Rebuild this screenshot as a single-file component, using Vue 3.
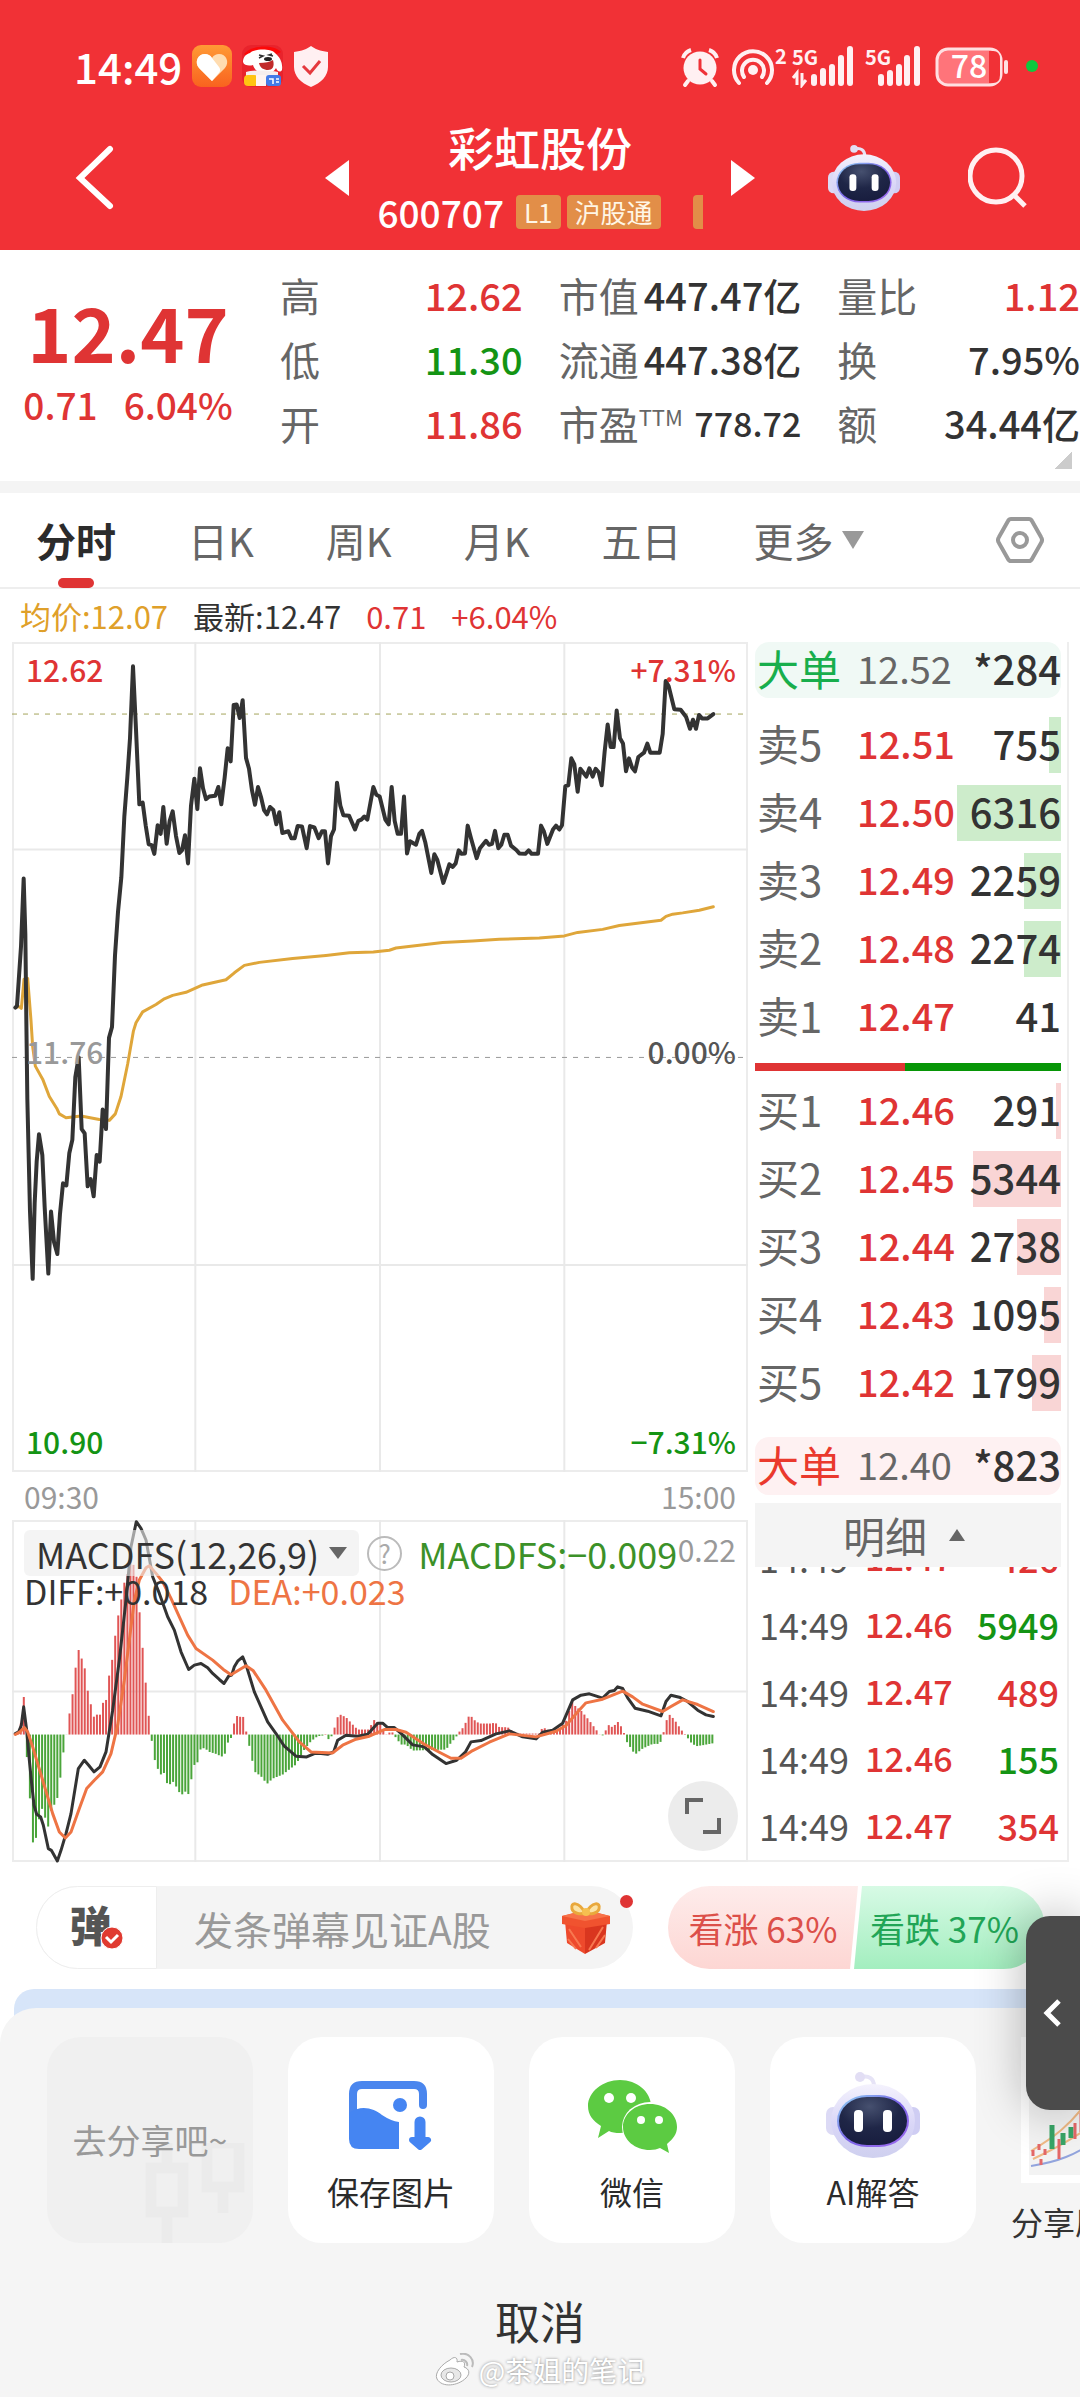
<script setup>
const stats = [
  [
    { label: '高', value: '12.62', tone: 'up' },
    { label: '低', value: '11.30', tone: 'down' },
    { label: '开', value: '11.86', tone: 'up' },
  ],
  [
    { label: '市值', value: '447.47亿' },
    { label: '流通', value: '447.38亿' },
    { label: '市盈', sup: 'TTM', value: '778.72', small: true },
  ],
  [
    { label: '量比', value: '1.12', tone: 'up' },
    { label: '换', value: '7.95%' },
    { label: '额', value: '34.44亿' },
  ],
]

const tabs = ['分时', '日K', '周K', '月K', '五日']

const asks = [
  { label: '卖5', price: '12.51', volume: 755, bar: 12 },
  { label: '卖4', price: '12.50', volume: 6316, bar: 104 },
  { label: '卖3', price: '12.49', volume: 2259, bar: 37 },
  { label: '卖2', price: '12.48', volume: 2274, bar: 37 },
  { label: '卖1', price: '12.47', volume: 41, bar: 0 },
]
const bids = [
  { label: '买1', price: '12.46', volume: 291, bar: 5 },
  { label: '买2', price: '12.45', volume: 5344, bar: 88 },
  { label: '买3', price: '12.44', volume: 2738, bar: 44 },
  { label: '买4', price: '12.43', volume: 1095, bar: 17 },
  { label: '买5', price: '12.42', volume: 1799, bar: 29 },
]
const trades = [
  { time: '14:49', price: '12.47', volume: 426, tone: 'up' },
  { time: '14:49', price: '12.46', volume: 5949, tone: 'down' },
  { time: '14:49', price: '12.47', volume: 489, tone: 'up' },
  { time: '14:49', price: '12.46', volume: 155, tone: 'down' },
  { time: '14:49', price: '12.47', volume: 354, tone: 'up' },
]

const priceLine =
  '48,870 53,866 58,810 65,730 73,573 78,700 81,900 84,1080 92,1340 100,1495 106,1320 112,1225 119,1162 129,1210 136,1330 147,1483 155,1340 164,1410 174,1438 182,1345 191,1275 201,1280 210,1205 219,1175 228,1030 238,985 247,1150 256,1160 265,1282 274,1265 283,1305 292,1210 301,1225 310,1105 320,1150 329,940 338,915 347,750 356,650 366,570 375,430 384,340 392,250 401,84 410,230 420,402 430,398 439,450 448,494 457,496 465,516 475,450 484,470 492,408 502,493 511,440 520,418 530,475 540,514 548,508 557,473 566,538 575,405 585,343 594,413 602,319 611,365 620,390 630,384 648,382 657,362 666,402 676,340 685,273 694,303 703,173 712,172 721,203 730,162 740,295 749,320 758,370 767,403 776,362 785,385 794,415 803,425 812,408 822,415 831,448 840,420 849,468 867,464 876,480 886,480 895,452 908,453 922,503 932,452 945,455 958,480 968,464 977,464 986,538 995,475 1004,460 1013,352 1023,405 1032,427 1049,428 1067,460 1077,440 1086,437 1095,430 1104,437 1113,400 1122,362 1131,380 1141,384 1158,437 1168,448 1177,362 1186,440 1195,470 1205,470 1214,384 1223,515 1232,487 1250,495 1260,470 1268,463 1278,490 1296,560 1305,517 1314,530 1332,583 1342,560 1350,540 1360,546 1369,538 1378,508 1387,516 1397,515 1405,451 1415,480 1432,526 1442,503 1460,486 1469,495 1478,493 1487,463 1497,503 1506,495 1515,472 1525,472 1535,497 1551,507 1560,515 1578,516 1588,508 1597,516 1616,516 1625,451 1634,465 1644,493 1661,460 1670,451 1680,460 1688,450 1698,360 1707,358 1716,296 1725,310 1735,373 1743,320 1761,338 1770,319 1780,338 1789,320 1798,328 1807,358 1816,280 1825,218 1834,270 1843,270 1852,186 1862,250 1871,262 1880,326 1889,296 1898,317 1907,326 1917,293 1934,283 1944,262 1953,283 1981,283 1990,240 1999,118 2008,130 2025,183 2044,184 2060,200 2072,228 2081,207 2090,228 2099,196 2108,204 2125,204 2142,194'
const averageLine =
  '48,870 60,868 66,872 70,840 74,805 85,803 95,900 100,960 108,1005 130,1035 150,1075 172,1102 180,1115 200,1124 245,1120 300,1128 330,1130 348,1115 365,1075 385,1000 402,925 410,905 430,880 470,863 495,850 520,842 560,835 610,818 680,806 705,790 735,773 780,766 880,757 980,750 1050,744 1122,742 1170,738 1190,733 1330,720 1420,717 1500,713 1620,710 1695,705 1735,697 1810,690 1860,681 1985,669 2000,660 2020,655 2050,652 2100,646 2142,638'
const diffLine =
  '48,1000 58,995 66,975 73,920 82,990 90,1080 97,1150 104,1215 112,1242 124,1250 132,1275 147,1345 156,1350 174,1382 185,1350 200,1300 215,1240 228,1160 237,1105 255,1080 268,1095 284,1115 302,1100 320,1055 340,930 360,780 380,600 395,440 411,365 425,385 440,420 460,530 480,580 505,650 525,690 545,755 568,808 585,795 605,790 625,803 640,820 660,838 674,850 688,828 697,825 705,800 715,783 730,770 742,800 765,875 785,920 805,965 830,1000 855,1038 890,1068 922,1070 945,1060 965,1060 985,1062 1003,1055 1015,1020 1040,1005 1075,1008 1105,1002 1135,969 1150,969 1165,982 1185,982 1210,1004 1240,1034 1275,1040 1300,1063 1340,1090 1372,1080 1398,1056 1415,1025 1445,1021 1490,1001 1530,992 1570,1010 1610,1016 1630,996 1660,990 1690,969 1720,899 1745,885 1770,881 1810,894 1830,874 1845,871 1855,860 1870,865 1885,893 1907,924 1945,933 1985,947 2000,904 2015,885 2040,891 2065,904 2095,930 2120,944 2142,949'
const deaLine =
  '48,1003 62,995 75,982 85,995 100,1040 130,1140 160,1240 180,1295 198,1313 215,1295 240,1225 262,1165 285,1140 310,1115 335,1060 355,975 375,840 390,720 405,600 420,540 440,503 450,497 470,520 490,545 515,595 540,650 565,705 590,745 640,780 672,808 695,824 715,812 740,797 762,812 800,870 850,960 900,1025 935,1055 1000,1058 1030,1035 1070,1017 1110,1008 1155,988 1190,988 1220,996 1275,1032 1320,1056 1355,1074 1385,1074 1420,1051 1470,1026 1530,1001 1610,1010 1670,993 1700,976 1730,941 1760,908 1810,897 1870,873 1900,890 1930,912 1990,934 2015,919 2050,899 2095,913 2142,934'

// Histogram envelope as [x, height] pairs; one bar is drawn per trading minute.
const envelope = [
  [46, 3], [55, 5], [64, 30], [73, 121], [82, -60], [91, -180], [100, -324], [109, -316], [118, -258], [128, -222],
  [137, -248], [147, -277], [155, -230], [165, -210], [174, -190], [183, -130], [192, -55], [201, -3], [210, 60],
  [219, 115], [228, 195], [237, 256], [247, 228], [256, 200], [265, 133], [274, 93], [283, 53], [292, 60], [301, 56],
  [311, 95], [320, 102], [329, 175], [338, 220], [347, 292], [356, 353], [365, 400], [375, 455], [384, 480],
  [393, 520], [402, 510], [411, 480], [420, 375], [429, 270], [438, 167], [447, 66], [456, -10], [465, -72],
  [474, -100], [485, -120], [493, -112], [502, -145], [511, -150], [520, -140], [530, -155], [539, -172],
  [548, -180], [557, -170], [566, -183], [575, -140], [584, -92], [594, -85], [603, -45], [615, -40], [630, -52],
  [650, -58], [667, -66], [676, -60], [685, -25], [694, -15], [703, 30], [712, 56], [721, 52], [730, 60], [740, 12],
  [749, -30], [758, -75], [767, -112], [785, -125], [803, -148], [820, -132], [850, -120], [876, -100], [890, -90],
  [915, -45], [935, -20], [955, -5], [970, -3], [977, 4], [986, -15], [1000, -2], [1013, 50], [1022, 60], [1040, 52],
  [1058, 32], [1075, 15], [1110, 15], [1122, 45], [1145, 30], [1160, 0], [1177, 10], [1190, -10], [1205, -30],
  [1220, -30], [1240, -48], [1340, -45], [1355, -25], [1370, -8], [1377, 5], [1395, 25], [1405, 52], [1414, 57],
  [1423, 45], [1440, 33], [1478, 33], [1487, 37], [1500, 22], [1525, 22], [1540, 10], [1560, 3], [1620, 3],
  [1630, 22], [1650, 12], [1680, 15], [1700, 40], [1720, 105], [1728, 85], [1745, 72], [1770, 42], [1790, 15],
  [1805, -5], [1815, 0], [1825, 30], [1843, 20], [1852, 42], [1862, 30], [1872, 12], [1880, -18], [1907, -60],
  [1930, -42], [1960, -28], [1981, -28], [1990, -8], [1998, 35], [2010, 60], [2025, 45], [2045, 15], [2055, 3],
  [2062, -3], [2070, -20], [2090, -35], [2110, -32], [2147, -25],
]
const zero = 1003
function heightAt(x) {
  const i = envelope.findIndex((p) => p[0] >= x)
  if (i <= 0) return envelope[0][1]
  const [x0, h0] = envelope[i - 1]
  const [x1, h1] = envelope[i]
  return h0 + ((h1 - h0) * (x - x0)) / (x1 - x0)
}
const bars = Array.from({ length: 230 }, (_, i) => {
  const x = 46 + i * 9.14
  const h = heightAt(x)
  return { x: x - 3, y: h > 0 ? zero - h : zero, h: Math.abs(h), up: h > 0 }
})
</script>

<template>
  <div class="page">
    <svg class="defs" width="0" height="0" aria-hidden="true">
      <defs>
        <linearGradient id="shell" x1="0" y1="0" x2="0" y2="1">
          <stop offset="0" stop-color="#f4f2fd" /><stop offset="0.55" stop-color="#d9d6f7" /><stop offset="1" stop-color="#cfd0ef" />
        </linearGradient>
        <linearGradient id="rim" x1="0" y1="0" x2="1" y2="1">
          <stop offset="0" stop-color="#8fd8f4" /><stop offset="0.5" stop-color="#7a63e6" /><stop offset="1" stop-color="#a06bf0" />
        </linearGradient>
        <radialGradient id="visor" cx="0.45" cy="0.2" r="0.9">
          <stop offset="0" stop-color="#46506f" /><stop offset="0.5" stop-color="#1f2647" /><stop offset="1" stop-color="#161b3c" />
        </radialGradient>
        <symbol id="robot" viewBox="0 0 94 88">
          <path d="M35 6c8-2 13 2 13 9" fill="none" stroke="#e6e3f6" stroke-width="4" />
          <circle cx="34" cy="6" r="5" fill="#e2def4" />
          <rect x="0" y="36" width="14" height="28" rx="7" fill="#dcdaf5" />
          <rect x="80" y="36" width="14" height="28" rx="7" fill="#cfcdf3" />
          <ellipse cx="47" cy="50" rx="42" ry="37" fill="url(#shell)" />
          <rect x="11" y="24" width="72" height="52" rx="30" fill="url(#rim)" />
          <rect x="13" y="26" width="68" height="48" rx="28" fill="url(#visor)" />
          <rect x="28" y="39" width="9" height="22" rx="4" fill="#fff" />
          <rect x="57" y="39" width="9" height="22" rx="4" fill="#fff" />
        </symbol>
      </defs>
    </svg>

    <header class="header">
      <div class="status">
        <div class="status-side">
          <span class="clock">14:49</span>
          <svg width="40" height="42" viewBox="0 0 40 42">
            <defs><linearGradient id="orange" x1="0" y1="0" x2="0" y2="1"><stop offset="0" stop-color="#ff9a35" /><stop offset="1" stop-color="#f9621f" /></linearGradient></defs>
            <rect width="40" height="42" rx="9" fill="url(#orange)" />
            <path d="M20 36 7 23c-5-6-1-14 6-14 3 0 5 1 7 4 2-3 4-4 7-4 7 0 11 8 6 14z" fill="#ffdcb0" />
            <path d="M20 36 7 23c-5-6-1-14 6-14 3 0 5 1 7 4l7 9c2 3 1 5-1 7z" fill="#fff" />
          </svg>
          <svg width="41" height="42" viewBox="0 0 41 42">
            <rect width="41" height="42" rx="9" fill="#e8232c" />
            <path d="M2 9c6-8 28-11 37-2L30 11 8 13z" fill="#fd0808" />
            <path d="M8 8c4-4 20-5 25 0 5 4 8 10 7 17-2 3-5 1-6-2-4 8-20 8-23-3-3 1-9 1-10-3 0-5 3-8 7-9z" fill="#fff" />
            <path d="M17 18c6 0 11-1 14-3 2 7-1 10-5 10s-8-2-9-7z" fill="#c12a2a" />
            <ellipse cx="26" cy="14" rx="4" ry="2" fill="#222" />
            <path d="m17 10 4 1-4 2m13-4-3 1 4 1" fill="none" stroke="#333" stroke-width="1.500" />
            <path d="M4 27c6-2 24-2 32 0v6H4z" fill="#f6eeee" />
            <rect x="2" y="30" width="14" height="11" rx="4" fill="#ffc312" />
            <rect x="14" y="30" width="10" height="11" fill="#fff3f0" />
            <rect x="24" y="30" width="15" height="11" rx="3" fill="#437be8" />
            <path d="M27 34h4v5m3-5h3m-3 3h3" fill="none" stroke="#fff" stroke-width="1.500" />
          </svg>
          <svg width="36" height="42" viewBox="0 0 36 42">
            <path d="M18 1c4 3 9 5 17 6v15c0 9-7 16-17 20C8 38 1 31 1 22V7c8-1 13-3 17-6z" fill="#fff0f2" />
            <path d="m10 21 7 7 10-12" fill="none" stroke="#e5393e" stroke-width="3" />
          </svg>
        </div>
        <svg width="360" height="44" viewBox="0 0 360 44">
          <g fill="none" stroke="#fff0f2">
            <circle cx="20" cy="24" r="16.500" fill="#fff0f2" stroke="none" />
            <path d="M3 14a12 12 0 0 1 8-8M37 14a12 12 0 0 0-8-8" stroke-width="4" />
            <path d="m8 37-3 4m27-4 3 4" stroke-width="4" stroke-linecap="round" />
            <path d="M20 16v9l6 5" stroke="#ef3238" stroke-width="3" stroke-linecap="round" />
            <path d="M59 39a19 19 0 1 1 28 0" stroke-width="4" stroke-linecap="round" />
            <path d="M64 33a11 11 0 1 1 18 0" stroke-width="4" stroke-linecap="round" />
            <circle cx="73" cy="26" r="5" fill="#fff0f2" stroke="none" />
          </g>
          <g fill="#fff0f2" class="tiny">
            <text x="95" y="20">2</text>
            <text x="112" y="21">5G</text>
            <text x="185" y="21">5G</text>
          </g>
          <path d="M117 41V29l-4 5m9-5v12l4-5" fill="none" stroke="#fff0f2" stroke-width="3" />
          <g stroke="#fff0f2" stroke-width="6" stroke-linecap="round">
            <path d="M134 33v6m9-12v12m9-16v16m9-25v25m9-34v34" />
            <path d="M201 33v6m9-10v10m9-16v16m8-25v25m10-34v34" />
          </g>
          <rect x="257" y="5" width="64" height="36" rx="11" fill="#ff747a" stroke="#ffdfe1" stroke-width="3" />
          <path d="M309 7h4q7 0 7 8v16q0 8-7 8h-4z" fill="#f13136" />
          <path d="M326 18v10" stroke="#ffdfe1" stroke-width="4" stroke-linecap="round" />
          <text x="289" y="34" text-anchor="middle" class="charge">78</text>
          <circle cx="352" cy="22" r="6" fill="#0fc83e" />
        </svg>
      </div>

      <nav class="nav">
        <button class="icon-btn back" aria-label="返回">
          <svg width="40" height="66" viewBox="0 0 40 66"><path d="M36 4 6 33l30 28" fill="none" stroke="#fff" stroke-width="6" stroke-linecap="round" /></svg>
        </button>
        <div class="switcher">
          <button class="icon-btn" aria-label="上一只">
            <svg width="24" height="36" viewBox="0 0 24 36"><path d="M24 0v36L0 18z" fill="#fff" /></svg>
          </button>
          <div class="stock">
            <h1>彩虹股份</h1>
            <div class="code-row">
              <span class="code">600707</span>
              <span class="tag">L1</span>
              <span class="tag">沪股通</span>
              <span class="tag cut"></span>
            </div>
          </div>
          <button class="icon-btn" aria-label="下一只">
            <svg width="24" height="36" viewBox="0 0 24 36"><path d="M0 0v36l24-18z" fill="#fff" /></svg>
          </button>
        </div>
        <div class="nav-right">
          <button class="icon-btn" aria-label="AI助手"><svg width="72" height="68"><use href="#robot" /></svg></button>
          <button class="icon-btn" aria-label="搜索">
            <svg width="60" height="62" viewBox="0 0 60 62"><circle cx="28" cy="29" r="26" fill="none" stroke="#fff0f2" stroke-width="5" /><path d="m46 48 11 11" stroke="#fff0f2" stroke-width="5" /></svg>
          </button>
        </div>
      </nav>
    </header>

    <section class="quote">
      <div class="last up">
        <div class="last-price">12.47</div>
        <div class="last-change"><span>0.71</span><span>6.04%</span></div>
      </div>
      <div class="stats">
        <dl v-for="(col, i) in stats" :key="i">
          <div v-for="s in col" :key="s.label" class="stat">
            <dt>{{ s.label }}<sup v-if="s.sup">{{ s.sup }}</sup></dt>
            <dd :class="[s.tone, { small: s.small }]">{{ s.value }}</dd>
          </div>
        </dl>
      </div>
      <i class="corner"></i>
    </section>

    <nav class="tabs">
      <button v-for="(t, i) in tabs" :key="t" :class="{ active: i === 0 }">{{ t }}</button>
      <button class="more">更多<i></i></button>
      <button class="icon-btn gear" aria-label="设置">
        <svg width="48" height="48" viewBox="0 0 48 48" fill="none" stroke="#999"><path d="M15 3h18q2 0 3 2l9 16q2 3 0 6l-9 16q-1 2-3 2H15q-2 0-3-2L3 27q-2-3 0-6l9-16q1-2 3-2z" stroke-width="4" /><circle cx="24" cy="24" r="7" stroke-width="4" /></svg>
      </button>
    </nav>

    <div class="summary">
      <span class="avg">均价:12.07</span><span>最新:12.47</span><span class="up">0.71</span><span class="up">+6.04%</span>
    </div>

    <main class="board">
      <div class="charts">
        <figure class="price-chart">
          <svg viewBox="0 0 2208 1912" preserveAspectRatio="none">
            <path class="grid" d="M550 0V1912M1104 0V1912M1657 0V1912M0 478H2208M0 1435H2208" />
            <path class="dash olive" d="M0 166H2208" />
            <path class="dash" d="M0 957H2208" />
            <g transform="translate(-38 -28)">
              <polyline class="average" :points="averageLine" />
              <polyline class="price" :points="priceLine" />
            </g>
          </svg>
          <span class="mark tl up">12.62</span>
          <span class="mark tr up">+7.31%</span>
          <span class="mark ml">11.76</span>
          <span class="mark mr">0.00%</span>
          <span class="mark bl down">10.90</span>
          <span class="mark br down">−7.31%</span>
        </figure>
        <div class="times"><span>09:30</span><span>15:00</span></div>
        <figure class="macd-chart">
          <svg viewBox="0 0 2208 1025" preserveAspectRatio="none">
            <path class="grid" d="M550 0V1025M1104 0V1025M1657 0V1025M0 514H2208" />
            <g transform="translate(-38 -360)">
              <rect v-for="(b, i) in bars" :key="i" :x="b.x" :y="b.y" width="6" :height="b.h" :fill="b.up ? '#e05555' : '#4aa53a'" />
              <polyline class="diff" :points="diffLine" />
              <polyline class="dea" :points="deaLine" />
            </g>
          </svg>
          <div class="legend">
            <div class="legend-row">
              <button class="indicator">MACDFS(12,26,9)<i></i></button>
              <button class="help" aria-label="指标说明">?</button>
              <span class="macd-value">MACDFS:−0.009</span>
            </div>
            <div class="legend-row second"><span>DIFF:+0.018</span><span class="dea-value">DEA:+0.023</span></div>
          </div>
          <span class="scale">0.22</span>
          <button class="expand" aria-label="全屏">
            <svg width="38" height="38" viewBox="0 0 38 38" fill="none" stroke="#666" stroke-width="4"><path d="M3 17V3h16M35 21v14H19" /></svg>
          </button>
        </figure>
      </div>

      <aside class="book">
        <div class="big green"><b>大单</b><span>12.52</span><em>*284</em></div>
        <table class="levels">
          <tbody>
            <tr v-for="r in asks" :key="r.label">
              <th scope="row">{{ r.label }}</th>
              <td class="lv-price">{{ r.price }}</td>
              <td class="lv-vol"><i class="ask" :style="{ width: r.bar + 'px' }"></i><span>{{ r.volume }}</span></td>
            </tr>
          </tbody>
        </table>
        <div class="ratio"></div>
        <table class="levels bids">
          <tbody>
            <tr v-for="r in bids" :key="r.label">
              <th scope="row">{{ r.label }}</th>
              <td class="lv-price">{{ r.price }}</td>
              <td class="lv-vol"><i class="bid" :style="{ width: r.bar + 'px' }"></i><span>{{ r.volume }}</span></td>
            </tr>
          </tbody>
        </table>
        <div class="big pink"><b>大单</b><span>12.40</span><em>*823</em></div>
        <button class="detail-toggle">明细<i></i></button>
        <div class="trades">
          <table>
            <tbody>
              <tr v-for="(t, i) in trades" :key="i">
                <td class="t-time">{{ t.time }}</td>
                <td class="t-price up">{{ t.price }}</td>
                <td class="t-vol" :class="t.tone">{{ t.volume }}</td>
              </tr>
            </tbody>
          </table>
        </div>
      </aside>
    </main>

    <section class="interact">
      <div class="danmu">
        <button class="danmu-switch" aria-label="弹幕开关">
          <span>弹</span>
          <svg width="24" height="24" viewBox="0 0 24 24"><circle cx="12" cy="12" r="11" fill="#e03a30" stroke="#fff" stroke-width="1" /><path d="m6 11 5 5 7-7" fill="none" stroke="#fff" stroke-width="3" /></svg>
        </button>
        <input type="text" placeholder="发条弹幕见证A股" aria-label="发弹幕" />
        <button class="icon-btn gift" aria-label="礼物">
          <svg width="50" height="54" viewBox="0 0 50 54">
            <path d="M4 20 24 25v28L6 42z" fill="#ee4a2c" /><path d="M46 20 24 25v28l20-11z" fill="#d9361f" />
            <path d="m8 28 12 18m-13-8 8 10M42 26 28 49m16-15-9 13" stroke="#f87850" stroke-width="2" />
            <path d="M1 15 25 9l24 6v8l-25 4-23-4z" fill="#f0532f" /><path d="M1 15 24 20l25-5-24-6z" fill="#f77249" />
            <path d="M24 12C18 0 9 1 11 8c1 4 8 6 13 4zm1 0C31 0 40 1 38 8c-1 4-8 6-13 4z" fill="#fbe2a4" stroke="#e9a83c" stroke-width="3" />
            <circle cx="25" cy="11" r="4" fill="#f6c050" />
          </svg>
        </button>
        <i class="dot"></i>
      </div>
      <div class="votes">
        <button class="bull">看涨 63%</button>
        <button class="bear">看跌 37%</button>
      </div>
    </section>

    <div class="banner"></div>

    <section class="sheet">
      <button class="drawer" aria-label="展开侧栏">
        <svg width="20" height="30" viewBox="0 0 20 30"><path d="M16 3 4 15l12 12" fill="none" stroke="#fff" stroke-width="5" /></svg>
      </button>
      <div class="cards">
        <div class="card hint">
          <svg width="108" height="100" viewBox="0 0 108 100" fill="none" stroke="#ebebeb">
            <path d="M22 0v24M22 72v28M78-20v22M78 48v22" stroke-width="11" /><path d="M6 25h32v44H6zM62 0h32v44H62z" stroke-width="11" />
          </svg>
          <span>去分享吧~</span>
        </div>
        <button class="card">
          <svg width="86" height="90" viewBox="0 0 86 90">
            <path d="M75 34V23q0-9-9-9H14q-9 0-9 9v40" fill="none" stroke="#4a86ee" stroke-width="8" stroke-linecap="round" />
            <path d="M1 42C14 33 26 38 34 44q9 6 17 7v27H11Q1 78 1 68z" fill="#4585f2" /><circle cx="52" cy="34" r="7" fill="#4585f2" />
            <path d="M72 51v20" stroke="#4585f2" stroke-width="11" stroke-linecap="round" /><path d="m64 69 8 7 8-7z" fill="#4585f2" stroke="#4585f2" stroke-width="6" stroke-linejoin="round" />
          </svg>
          <span>保存图片</span>
        </button>
        <button class="card">
          <svg width="90" height="90" viewBox="0 0 90 90">
            <path d="M33 9c17 0 31 12 31 26S50 62 33 62q-7 0-11-2L11 67l3-12C6 50 1 44 1 35 1 21 16 9 33 9z" fill="#5ccb42" />
            <ellipse cx="63" cy="56" rx="28" ry="25" fill="#fff" />
            <path d="M63 33c15 0 27 10 27 23 0 7-4 12-10 17l2 9-9-5q-4 2-10 2c-15 0-27-10-27-23s12-23 27-23z" fill="#5ccb42" />
            <g fill="#fff"><circle cx="22" cy="27" r="5" /><circle cx="44" cy="27" r="5" /><circle cx="54" cy="49" r="4" /><circle cx="72" cy="49" r="4" /></g>
          </svg>
          <span>微信</span>
        </button>
        <button class="card">
          <svg width="94" height="90" viewBox="0 0 94 90"><use href="#robot" width="94" height="88" /></svg>
          <span>AI解答</span>
        </button>
        <div class="share">
          <svg width="148" height="146" viewBox="0 0 148 146">
            <rect x="0" y="0" width="148" height="146" fill="#fff" /><rect x="8" y="8" width="132" height="130" fill="#f3f3f3" />
            <path d="M10 129c25-4 45-10 70-30" fill="none" stroke="#92a4dd" stroke-width="2" />
            <path d="M10 114c20-12 40-25 60-55M12 122c22-10 40-20 62-36" fill="none" stroke="#efb985" stroke-width="2" />
            <path d="M31 88v24M42 96v12M50 90v11" stroke="#38a567" stroke-width="5" />
            <path d="M12 113v6m6-12v6m6-1v6m14-16v20m16-36v16m6-26v19m6-30v24M20 122v6" stroke="#e46868" stroke-width="3" />
          </svg>
          <span>分享原图</span>
        </div>
      </div>
      <button class="cancel">取消</button>
      <div class="watermark">
        <svg width="40" height="34" viewBox="0 0 40 34" fill="#fff" stroke="#aaa" stroke-width="1">
          <path d="M15 7c4-4 8-3 7 2 6-2 9 0 7 5 6 2 6 7 2 11-8 8-24 10-29 1C-1 20 7 11 15 7z" />
          <ellipse cx="16" cy="22" rx="10" ry="7" fill="#e8e8e8" /><circle cx="15" cy="23" r="4" fill="#fff" />
          <path d="M25 1c9-2 15 6 12 13M26 7c4-1 7 3 6 6" fill="none" stroke="#bbb" stroke-width="2" />
        </svg>
        @茶姐的笔记
      </div>
    </section>
  </div>
</template>

<style>
body {
  margin: 0;
  background: #f5f5f5;
}
</style>

<style scoped>
.page {
  position: relative;
  overflow: hidden;
  background: #fff;
  color: #333;
  font-family: 'Noto Sans CJK SC', 'Noto Sans', sans-serif;
  font-size: 30px;
  line-height: 1;
}
.defs {
  position: absolute;
}
button {
  padding: 0;
  border: 0;
  background: none;
  color: inherit;
  font: inherit;
}
h1,
dl,
dd,
figure {
  margin: 0;
}
svg {
  display: block;
  flex: none;
}
i,
em {
  font-style: normal;
}
.up {
  color: #df3434;
}
.down {
  color: #149414;
}

.header {
  background: #f13136;
  color: #fff;
}
.status {
  display: flex;
  justify-content: space-between;
  align-items: center;
  height: 44px;
  padding: 44px 40px 22px 74px;
}
.status-side {
  display: flex;
  align-items: center;
  gap: 10px;
}
.clock {
  font-size: 42px;
  font-weight: 500;
}
.tiny {
  font-size: 20px;
  font-weight: 700;
}
.charge {
  fill: #fff;
  font-size: 32px;
  font-weight: 500;
}
.nav {
  display: grid;
  grid-template-columns: 1fr auto 1fr;
  align-items: center;
  height: 140px;
  padding: 0 52px 4px 74px;
}
.nav {
  box-sizing: border-box;
}
.icon-btn {
  display: block;
}
.back {
  justify-self: start;
}
.switcher {
  display: flex;
  align-items: center;
  gap: 28px;
  margin-right: 22px;
}
.stock {
  padding-bottom: 10px;
  text-align: center;
}
h1 {
  margin-bottom: 18px;
  font-size: 46px;
  font-weight: 500;
  line-height: 60px;
}
.code-row {
  display: flex;
  align-items: center;
  height: 36px;
  gap: 6px;
}
.code {
  margin-right: 6px;
  font-size: 37px;
  font-weight: 500;
}
.tag {
  padding: 0 8px;
  border-radius: 4px;
  background: #e28e48;
  color: #fff6e6;
  font-size: 26px;
  line-height: 34px;
}
.tag.cut {
  width: 10px;
  height: 34px;
  margin-left: 26px;
  padding: 0;
  border-radius: 4px 0 0 4px;
}
.nav-right {
  display: flex;
  justify-self: end;
  align-items: center;
  gap: 68px;
}

.quote {
  position: relative;
  display: flex;
  gap: 24px;
  height: 231px;
  border-bottom: 12px solid #f4f4f4;
}
.last {
  width: 256px;
  padding-top: 36px;
  text-align: center;
}
.last-price {
  font-size: 75px;
  font-weight: 700;
  line-height: 90px;
}
.last-change {
  display: flex;
  justify-content: center;
  gap: 26px;
  font-size: 37px;
  font-weight: 500;
  line-height: 56px;
}
.stats {
  display: grid;
  flex: 1;
  grid-template-columns: repeat(3, 1fr);
  gap: 36px;
  padding-top: 13px;
}
.stat {
  display: flex;
  justify-content: space-between;
  align-items: center;
  height: 64px;
  font-size: 38px;
  white-space: nowrap;
}
.stat dt {
  color: #666;
  font-size: 40px;
}
.stat sup {
  font-size: 22px;
  line-height: 20px;
}
.stat dd {
  font-weight: 500;
}
.stat .small {
  font-size: 34px;
}
.corner {
  position: absolute;
  right: 8px;
  bottom: 12px;
  width: 18px;
  height: 18px;
  background: linear-gradient(135deg, transparent 50%, #ccc 50%);
}

.tabs {
  display: flex;
  align-items: center;
  gap: 72px;
  height: 94px;
  padding: 0 36px;
  border-bottom: 2px solid #eee;
  color: #666;
  font-size: 40px;
}
.tabs button {
  position: relative;
}
.tabs .active {
  color: #2b2b2b;
  font-weight: 700;
}
.tabs .active::after {
  content: '';
  position: absolute;
  left: 22px;
  bottom: -28px;
  width: 36px;
  height: 10px;
  border-radius: 5px;
  background: #df3434;
}
.more {
  display: flex;
  align-items: center;
  gap: 8px;
}
.more i {
  border: 11px solid transparent;
  border-top: 18px solid #999;
  border-bottom: 0;
}
.gear {
  margin-left: auto;
}

.summary {
  display: flex;
  align-items: center;
  gap: 25px;
  height: 53px;
  padding: 0 20px;
  font-size: 31px;
}
.avg {
  color: #dfa02a;
}

.board {
  display: flex;
  padding: 0 11px 0 12px;
}
.charts {
  flex: 1;
  min-width: 0;
}
figure {
  position: relative;
}
figure svg {
  width: 100%;
  overflow: visible;
}
.price-chart > svg,
.macd-chart > svg {
  box-shadow: 0 0 0 2px #ececec inset;
}
.price-chart > svg {
  height: 830px;
}
.macd-chart > svg {
  height: 342px;
}
.grid,
.dash,
polyline {
  fill: none;
  vector-effect: non-scaling-stroke;
}
.grid {
  stroke: #e9e9e9;
  stroke-width: 2px;
}
.dash {
  stroke: #999;
  stroke-width: 1px;
  stroke-dasharray: 5 6;
}
.olive {
  stroke: #a5a55c;
}
polyline {
  stroke-linejoin: round;
  stroke-linecap: round;
}
.price {
  stroke: #333;
  stroke-width: 4px;
}
.average {
  stroke: #dfa63a;
  stroke-width: 3px;
}
.diff {
  stroke: #333;
  stroke-width: 3px;
}
.dea {
  stroke: #ee7444;
  stroke-width: 3px;
}
.mark {
  position: absolute;
  font-size: 30px;
  font-weight: 500;
}
.tl,
.ml,
.bl {
  left: 14px;
}
.tr,
.mr,
.br {
  right: 12px;
}
.tl,
.tr {
  top: 12px;
}
.ml,
.mr {
  top: 394px;
}
.bl,
.br {
  bottom: 16px;
}
.ml {
  color: #999;
}
.mr {
  color: #555;
}
.times {
  display: flex;
  justify-content: space-between;
  align-items: center;
  height: 48px;
  padding: 0 12px;
  color: #999;
}
.legend {
  position: absolute;
  top: 10px;
  left: 12px;
  font-size: 36px;
}
.legend-row {
  display: flex;
  align-items: center;
  white-space: nowrap;
}
.indicator {
  display: flex;
  align-items: center;
  gap: 10px;
  height: 46px;
  padding: 0 12px;
  border-radius: 6px;
  background: rgba(236, 236, 236, 0.6);
}
.indicator i {
  border: 9px solid transparent;
  border-top: 12px solid #666;
  border-bottom: 0;
}
.help {
  width: 35px;
  height: 35px;
  margin: 0 16px 0 8px;
  border: 2px solid #bbb;
  border-radius: 50%;
  color: #aaa;
  font-size: 26px;
}
.macd-value {
  color: #3c9128;
}
.second {
  gap: 20px;
  font-size: 34px;
  line-height: 30px;
}
.dea-value {
  color: #ee7444;
}
.scale {
  position: absolute;
  top: 14px;
  right: 12px;
  color: #999;
}
.expand {
  position: absolute;
  right: 10px;
  bottom: 11px;
  display: grid;
  place-items: center;
  width: 70px;
  height: 70px;
  border-radius: 50%;
  background: #ececec;
}
.expand svg {
  width: 38px;
}

.book {
  width: 306px;
  padding: 0 6px 0 7px;
  border-right: 2px solid #eee;
  border-bottom: 2px solid #eee;
}
.big {
  display: grid;
  grid-template-columns: 100px 1fr auto;
  align-items: center;
  box-sizing: border-box;
  height: 56px;
  padding: 0 0 4px 2px;
  border-radius: 14px;
  font-size: 40px;
}
.big b {
  font-size: 42px;
  font-weight: 400;
}
.big span {
  color: #666;
  font-size: 38px;
}
.big em {
  font-weight: 500;
}
.green {
  background: #f0f9f5;
}
.green b {
  color: #18ae4c;
}
.pink {
  height: 58px;
  margin: 14px 0 8px;
  background: #fef1f2;
}
.pink b {
  color: #ea392d;
}
table {
  width: 100%;
  border-collapse: separate;
  table-layout: fixed;
}
th,
td {
  padding: 0 0 4px;
}
.levels {
  margin-top: 7px;
  border-spacing: 0 12px;
  font-size: 40px;
}
.bids {
  margin-top: 0;
}
.levels tr {
  height: 56px;
}
.levels th {
  width: 102px;
  padding-left: 2px;
  box-sizing: border-box;
  color: #666;
  font-size: 42px;
  font-weight: 400;
  text-align: left;
}
.lv-price {
  color: #df3434;
  font-size: 38px;
  font-weight: 500;
}
.lv-vol {
  position: relative;
  width: 104px;
  font-weight: 500;
  text-align: right;
}
.lv-vol i {
  position: absolute;
  top: 0;
  right: 0;
  height: 56px;
}
.lv-vol span {
  position: relative;
}
.ask {
  background: #cdeccb;
}
.bid {
  background: #f9d5d5;
}
.ratio {
  height: 8px;
  margin-top: 6px;
  background: linear-gradient(90deg, #df3434 49%, #079607 49%);
}
.detail-toggle {
  display: flex;
  justify-content: center;
  align-items: center;
  gap: 22px;
  width: 100%;
  height: 64px;
  padding-right: 8px;
  background: #f4f4f4;
  color: #666;
  font-size: 42px;
}
.detail-toggle i {
  border: 8px solid transparent;
  border-top: 0;
  border-bottom: 12px solid #666;
}
.trades {
  display: flex;
  align-items: flex-end;
  height: 293px;
  overflow: hidden;
}
.trades table {
  border-spacing: 0;
  font-size: 36px;
}
.trades tr {
  height: 67px;
}
.t-time {
  width: 106px;
  padding-left: 4px;
  color: #555;
}
.t-price {
  width: 94px;
  font-size: 34px;
}
.t-price,
.t-vol {
  font-weight: 500;
}
.t-vol {
  padding-right: 2px;
  text-align: right;
}

.interact {
  display: flex;
  gap: 35px;
  padding: 24px 35px 20px 36px;
}
.danmu {
  position: relative;
  display: flex;
  flex: 1;
  align-items: center;
  min-width: 0;
  height: 83px;
  border-radius: 42px;
  background: #f4f4f4;
}
.danmu-switch {
  display: flex;
  flex: none;
  justify-content: center;
  align-items: center;
  width: 121px;
  height: 83px;
  border: 1px solid #eee;
  border-radius: 42px 0 0 42px;
  background: #fff;
  color: #555;
  font-size: 42px;
  font-weight: 900;
}
.danmu-switch span {
  line-height: 60px;
  padding-bottom: 8px;
}
.danmu-switch svg {
  align-self: flex-end;
  margin: 0 0 18px -12px;
}
.danmu input {
  flex: 1;
  width: 0;
  min-width: 0;
  padding: 0 0 0 37px;
  border: 0;
  background: none;
  font: inherit;
  font-size: 39px;
}
.danmu input::placeholder {
  color: #999;
  opacity: 1;
}
.gift {
  margin-right: 22px;
}
.dot {
  position: absolute;
  top: 9px;
  right: 0;
  width: 13px;
  height: 13px;
  border-radius: 50%;
  background: #df3434;
}
.votes {
  display: flex;
  flex: none;
  font-size: 35px;
}
.votes button {
  height: 83px;
  white-space: pre;
}
.bull {
  width: 190px;
  border-radius: 42px 0 0 42px;
  clip-path: polygon(0 0, 100% 0, calc(100% - 8px) 100%, 0 100%);
}
.votes .bull {
  background: linear-gradient(#feeceb, #fdd6d3);
  color: #dc4f49;
}
.bear {
  width: 191px;
  margin-left: -4px;
  border-radius: 0 42px 42px 0;
  clip-path: polygon(8px 0, 100% 0, 100% 100%, 0 100%);
}
.votes .bear {
  padding-right: 10px;
  background: linear-gradient(#d7fae5, #a3eebf);
  color: #21a556;
}
.banner {
  height: 56px;
  margin-left: 14px;
  border-radius: 20px 0 0 0;
  background: #d7e5f9;
}

.sheet {
  position: relative;
  margin-top: -37px;
  padding: 29px 0 9px;
  border-radius: 36px 0 0 0;
  background: #f5f5f5;
}
.drawer {
  position: absolute;
  top: -92px;
  right: 0;
  z-index: 1;
  display: grid;
  place-items: center;
  width: 54px;
  height: 194px;
  border-radius: 24px 0 0 24px;
  box-shadow: 0 0 50px rgba(0, 0, 0, 0.3);
}
.sheet .drawer {
  background: #4b4b4b;
}
.cards {
  display: flex;
  gap: 35px;
  padding-left: 47px;
  overflow: hidden;
}
.card {
  display: flex;
  flex: none;
  flex-direction: column;
  align-items: center;
  gap: 14px;
  box-sizing: border-box;
  width: 206px;
  height: 206px;
  padding-top: 34px;
  border-radius: 34px;
  color: #2b2b2b;
  font-size: 32px;
}
.cards .card {
  background: #fff;
}
.cards .hint {
  position: relative;
  justify-content: center;
  padding: 0;
  background: #f0f0f0;
  color: #999;
  font-size: 34px;
}
.hint svg {
  position: absolute;
  right: 0;
  bottom: 0;
}
.hint span {
  position: relative;
}
.share {
  display: flex;
  flex: none;
  flex-direction: column;
  gap: 22px;
  font-size: 32px;
}
.share svg {
  margin-left: 10px;
}
.cancel {
  display: block;
  width: 100%;
  margin-top: 44px;
  font-size: 45px;
  line-height: 68px;
}
.watermark {
  display: flex;
  justify-content: center;
  align-items: center;
  gap: 4px;
  height: 30px;
  color: #fff;
  font-size: 28px;
  text-shadow: 0 0 3px #888;
}
</style>
